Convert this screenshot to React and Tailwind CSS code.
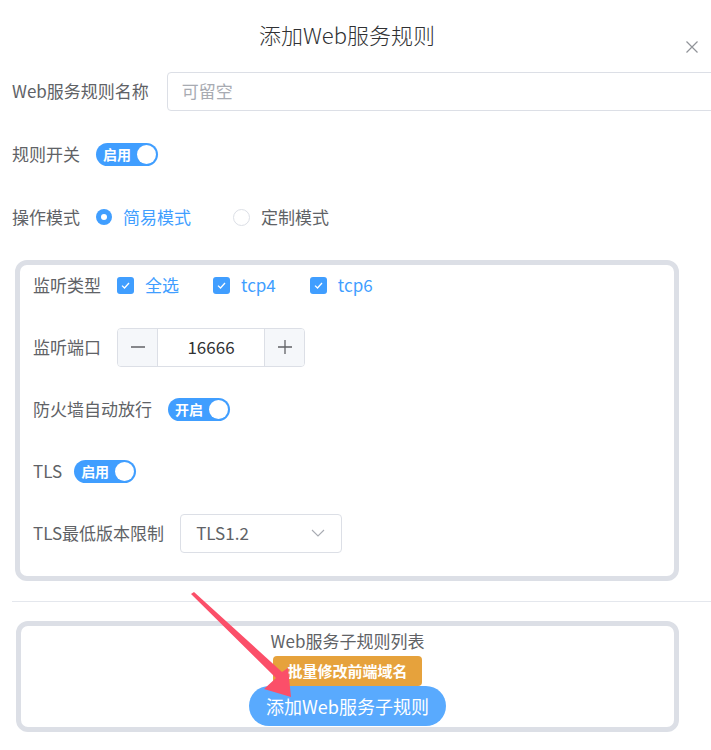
import { useState } from 'react';

function Switch({ text, on = true }) {
  return (
    <div className={`flex items-center w-[62px] h-[23px] rounded-full pl-[7px] pr-[2px] ${on ? 'bg-[#409eff]' : 'bg-[#dcdfe6]'}`}>
      <span className="text-[14px] font-bold text-white leading-none flex-1">{text}</span>
      <span className="w-[19px] h-[19px] rounded-full bg-white" />
    </div>
  );
}

function Check({ label }) {
  return (
    <label className="flex items-center gap-[11px]">
      <span className="w-[17px] h-[17px] rounded-[3px] bg-[#409eff] flex items-center justify-center">
        <svg width="11" height="11" viewBox="0 0 11 11" fill="none">
          <path d="M2 5.6 L4.5 8 L9 3" stroke="white" strokeWidth="1.3" />
        </svg>
      </span>
      <span className="text-[#409eff] text-[17px]">{label}</span>
    </label>
  );
}

function Radio({ label, checked }) {
  return (
    <label className="flex items-center gap-[11px]">
      {checked ? (
        <span className="w-[16px] h-[16px] rounded-full bg-[#409eff] flex items-center justify-center">
          <span className="w-[6px] h-[6px] rounded-full bg-white" />
        </span>
      ) : (
        <span className="w-[17px] h-[17px] rounded-full border border-[#dcdfe6] bg-white" />
      )}
      <span className={`text-[17px] ${checked ? 'text-[#409eff]' : 'text-[#606266]'}`}>{label}</span>
    </label>
  );
}

function Row({ label, children, gap = 'gap-4' }) {
  return (
    <div className={`flex items-center h-10 ${gap}`}>
      <span className="text-[17px] text-[#606266] whitespace-nowrap">{label}</span>
      {children}
    </div>
  );
}

export default function App() {
  const [port] = useState(16666);

  return (
    <div className="relative w-[711px] h-[750px] overflow-hidden bg-white font-['Noto_Sans_CJK_SC','Noto_Sans',sans-serif]">
      {/* Header */}
      <div className="w-[694px] pt-[19px] h-[49px] text-center">
        <span className="text-[22px] leading-[30px] font-light text-[#303133]">添加Web服务规则</span>
      </div>
      <button className="absolute left-[686px] top-[41px] w-3 h-3">
        <svg width="12" height="12" viewBox="0 0 12 12">
          <path d="M0.5 0.5 L11.5 11.5 M11.5 0.5 L0.5 11.5" stroke="#909399" strokeWidth="1.2" />
        </svg>
      </button>

      <div className="pl-3 mt-[22px]">
        <div className="flex flex-col gap-[23px]">
          <Row label="Web服务规则名称" gap="gap-[18px]">
            <div className="w-[560px] h-[39px] shrink-0 border border-[#dcdfe6] rounded-[4px] flex items-center px-[14px]">
              <span className="text-[17px] text-[#a8abb2]">可留空</span>
            </div>
          </Row>
          <Row label="规则开关">
            <Switch text="启用" />
          </Row>
          <Row label="操作模式">
            <div className="flex items-center gap-[42px]">
              <Radio label="简易模式" checked />
              <Radio label="定制模式" />
            </div>
          </Row>
        </div>
      </div>

      {/* Listen settings */}
      <div className="mt-[23px] ml-[15px] w-[664px] border-[5px] border-[#dcdfe6] rounded-[12px] pl-[13px] pb-[23px]">
        <div className="flex flex-col gap-[22px]">
          <Row label="监听类型">
            <div className="flex items-center gap-[34px]">
              <Check label="全选" />
              <Check label="tcp4" />
              <Check label="tcp6" />
            </div>
          </Row>
          <Row label="监听端口">
            <div className="flex h-[39px] w-[188px] border border-[#dcdfe6] rounded-[4px] overflow-hidden">
              <div className="w-10 bg-[#f5f7fa] border-r border-[#dcdfe6] flex items-center justify-center">
                <svg width="16" height="16" viewBox="0 0 16 16">
                  <path d="M1 8 H15" stroke="#606266" strokeWidth="1.3" />
                </svg>
              </div>
              <div className="flex-1 flex items-center justify-center text-[17px] text-[#303133]">{port}</div>
              <div className="w-10 bg-[#f5f7fa] border-l border-[#dcdfe6] flex items-center justify-center">
                <svg width="16" height="16" viewBox="0 0 16 16">
                  <path d="M1 8 H15 M8 1 V15" stroke="#606266" strokeWidth="1.3" />
                </svg>
              </div>
            </div>
          </Row>
          <Row label="防火墙自动放行">
            <Switch text="开启" />
          </Row>
          <Row label="TLS" gap="gap-3">
            <Switch text="启用" />
          </Row>
          <Row label="TLS最低版本限制">
            <div className="w-[162px] h-[39px] border border-[#dcdfe6] rounded-[4px] flex items-center justify-between pl-[15px] pr-[16px]">
              <span className="text-[17px] text-[#606266]">TLS1.2</span>
              <svg width="14" height="8" viewBox="0 0 14 8" fill="none">
                <path d="M1 1 L7 7 L13 1" stroke="#a8abb2" strokeWidth="1.1" />
              </svg>
            </div>
          </Row>
        </div>
      </div>

      <div className="mt-[20px] ml-3 h-px bg-[#e4e7ed]" />

      {/* Sub rules */}
      <div className="mt-[19px] ml-[16px] w-[663px] border-[5px] border-[#dcdfe6] rounded-[12px] pb-px flex flex-col items-center">
        <div className="h-[30px] flex items-center text-[17px] text-[#606266]">Web服务子规则列表</div>
        <button className="h-[30px] w-[149px] rounded-[4px] bg-[#e6a23c] text-white text-[15px] font-bold">批量修改前端域名</button>
        <button className="h-10 w-[197px] rounded-full bg-[#59aafe] text-white text-[18px] font-normal">添加Web服务子规则</button>
      </div>

      {/* annotation arrow */}
      <svg className="absolute inset-0 pointer-events-none" width="711" height="750">
        <polygon points="191,594 194,592 282,672 288,668 291,697 264,689 276,678" fill="#fb4f69" />
      </svg>
    </div>
  );
}
